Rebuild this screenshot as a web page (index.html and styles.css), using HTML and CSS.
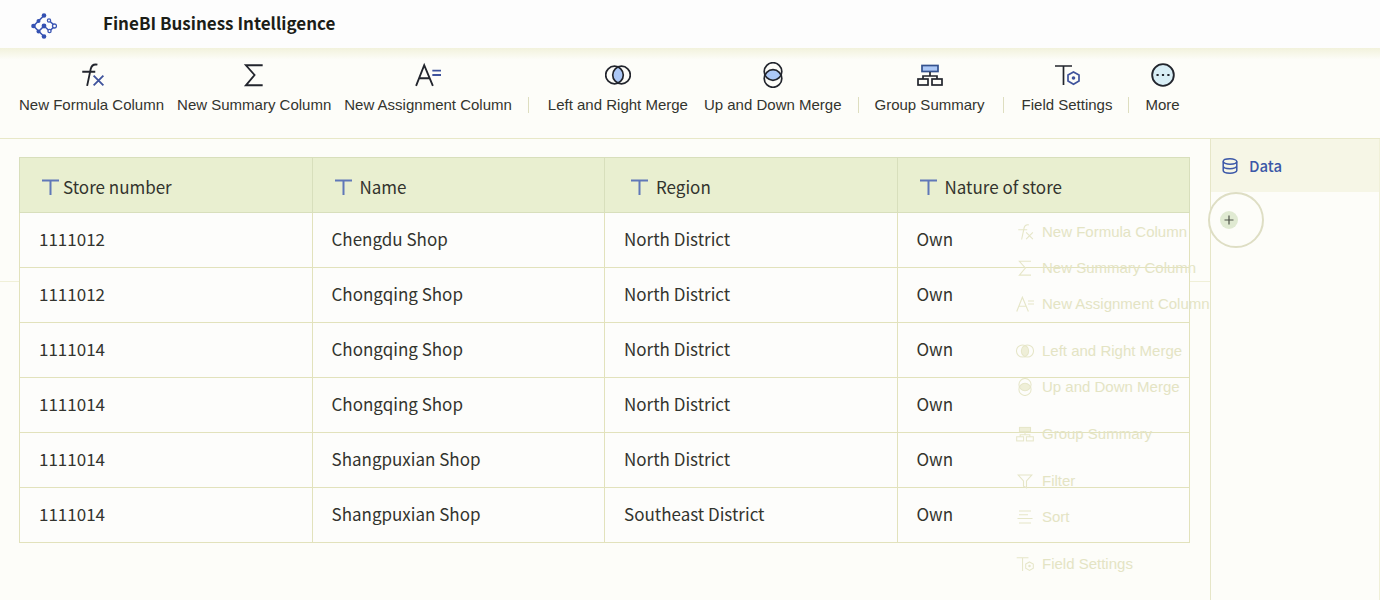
FILE: index.html
```html
<!DOCTYPE html>
<html lang="en">
<head>
<meta charset="utf-8">
<title>FineBI Business Intelligence</title>
<link rel="stylesheet" href="styles.css">
</head>
<body>
<svg class="defs" aria-hidden="true">
  <symbol id="i-formula" viewBox="0 0 24 24"><path d="M17 2.500c-4-.8-5.500.8-6.200 4L7.500 22M3 9h12" /><path class="accent" d="M13.500 12.500l9 9M22.500 12.500l-9 9"/></symbol>
  <symbol id="i-sum" viewBox="0 0 24 24"><path d="M20 3H4.500l8 9-8 9.500H20"/></symbol>
  <symbol id="i-assign" viewBox="0 0 24 24"><path d="M1 22L8.500 3l8 19M4 15h10"/><path class="accent" d="M16 8h8M16 12h8"/></symbol>
  <symbol id="i-lr" viewBox="0 0 26 24"><path class="tint" d="M13 4a9 9 0 0 1 0 16a9 9 0 0 1 0-16z"/><circle cx="9.500" cy="12" r="8.800"/><circle cx="16.500" cy="12" r="8.800"/></symbol>
  <symbol id="i-ud" viewBox="0 0 24 26"><path class="tint" d="M4 13a9 9 0 0 1 16 0a9 9 0 0 1-16 0z"/><circle cx="12" cy="9.500" r="8.800"/><circle cx="12" cy="16.500" r="8.800"/></symbol>
  <symbol id="i-group" viewBox="0 0 26 24"><rect class="tint" x="5" y="2.500" width="16" height="6"/><path d="M13 9v4M6 16v-3h14v3"/><rect x="1" y="16" width="10" height="6"/><rect x="15" y="16" width="10" height="6"/></symbol>
  <symbol id="i-field" viewBox="0 0 26 24"><path d="M1 3h17M9.500 3v19"/><path class="accent" d="M19.500 9l5.500 3v6l-5.500 3.200L14 18v-6z"/><circle class="dot" cx="19.500" cy="15" r="1.800"/></symbol>
  <symbol id="i-more" viewBox="0 0 24 24"><circle class="pale" cx="12" cy="12" r="10"/><path class="dots" d="M6 12h2M11 12h2M16 12h2"/></symbol>
  <symbol id="i-filter" viewBox="0 0 24 24"><path d="M3 4h18l-7 8v9l-4-2v-7z"/></symbol>
  <symbol id="i-sort" viewBox="0 0 24 24"><path d="M4 4h16M4 9h12M2 14h20M4 20h16"/></symbol>
  <symbol id="i-text" viewBox="0 0 17 16"><path d="M0 1.500h17M8.500 1v15"/></symbol>
</svg>

<header class="topbar">
  <svg class="logo" viewBox="0 0 26 26" aria-hidden="true">
    <path d="M13 2.500L2.500 13 13 23.500M7.500 18.500L13 13l5.500 5 5.500-5-6-5.500"/>
    <g class="solid"><circle cx="13" cy="2.500" r="2.300"/><circle cx="7.500" cy="8" r="2"/><circle cx="2.500" cy="13" r="2.300"/><circle cx="7.500" cy="18.500" r="2"/><circle cx="13" cy="23.500" r="2.300"/><circle cx="13" cy="13" r="2.400"/></g>
    <g class="hollow"><circle cx="18" cy="7.500" r="1.600"/><circle cx="23.500" cy="13" r="2"/><circle cx="18.500" cy="18" r="1.600"/></g>
  </svg>
  <h1 class="title">FineBI Business Intelligence</h1>
</header>

<nav class="toolbar" aria-label="Tools">
  <button class="tool"><svg class="icon"><use href="#i-formula"/></svg>New Formula Column</button>
  <button class="tool"><svg class="icon"><use href="#i-sum"/></svg>New Summary Column</button>
  <button class="tool"><svg class="icon"><use href="#i-assign"/></svg>New Assignment Column</button>
  <span class="sep"></span>
  <button class="tool tool-wide"><svg class="icon"><use href="#i-lr"/></svg>Left and Right Merge</button>
  <button class="tool"><svg class="icon"><use href="#i-ud"/></svg>Up and Down Merge</button>
  <span class="sep"></span>
  <button class="tool"><svg class="icon"><use href="#i-group"/></svg>Group Summary</button>
  <span class="sep sep-wide"></span>
  <button class="tool"><svg class="icon"><use href="#i-field"/></svg>Field Settings</button>
  <span class="sep"></span>
  <button class="tool"><svg class="icon"><use href="#i-more"/></svg>More</button>
</nav>

<div class="workspace">
  <main class="sheet">
    <table class="grid">
      <thead>
        <tr>
          <th><span class="head head-tight"><svg class="type"><use href="#i-text"/></svg>Store number</span></th>
          <th><span class="head"><svg class="type"><use href="#i-text"/></svg>Name</span></th>
          <th><span class="head head-inset"><svg class="type"><use href="#i-text"/></svg>Region</span></th>
          <th><span class="head"><svg class="type"><use href="#i-text"/></svg>Nature of store</span></th>
        </tr>
      </thead>
      <tbody>
        <tr><td>1111012</td><td>Chengdu Shop</td><td>North District</td><td>Own</td></tr>
        <tr><td>1111012</td><td>Chongqing Shop</td><td>North District</td><td>Own</td></tr>
        <tr><td>1111014</td><td>Chongqing Shop</td><td>North District</td><td>Own</td></tr>
        <tr><td>1111014</td><td>Chongqing Shop</td><td>North District</td><td>Own</td></tr>
        <tr><td>1111014</td><td>Shangpuxian Shop</td><td>North District</td><td>Own</td></tr>
        <tr><td>1111014</td><td>Shangpuxian Shop</td><td>Southeast District</td><td>Own</td></tr>
      </tbody>
    </table>
    <div class="menu">
      <button class="entry"><svg class="mini"><use href="#i-formula"/></svg>New Formula Column</button>
      <button class="entry"><svg class="mini"><use href="#i-sum"/></svg>New Summary Column</button>
      <button class="entry"><svg class="mini"><use href="#i-assign"/></svg>New Assignment Column</button>
      <button class="entry entry-first"><svg class="mini"><use href="#i-lr"/></svg>Left and Right Merge</button>
      <button class="entry"><svg class="mini"><use href="#i-ud"/></svg>Up and Down Merge</button>
      <button class="entry entry-first"><svg class="mini"><use href="#i-group"/></svg>Group Summary</button>
      <button class="entry entry-first"><svg class="mini"><use href="#i-filter"/></svg>Filter</button>
      <button class="entry"><svg class="mini"><use href="#i-sort"/></svg>Sort</button>
      <button class="entry entry-first"><svg class="mini"><use href="#i-field"/></svg>Field Settings</button>
    </div>
  </main>
  <aside class="panel">
    <h2 class="panel-head">
      <svg class="data" viewBox="0 0 16 16" aria-hidden="true"><ellipse cx="8" cy="3.500" rx="6.800" ry="2.700"/><path d="M1.200 3.500v9c0 1.500 3 2.700 6.800 2.700s6.800-1.200 6.800-2.700v-9M1.200 8c0 1.500 3 2.700 6.800 2.700s6.800-1.200 6.800-2.700"/></svg>
      Data
    </h2>
    <button class="add" aria-label="Add step"><svg class="plus" viewBox="0 0 18 18"><circle cx="9" cy="9" r="9"/><path d="M4.500 9h9M9 4.500v9"/></svg></button>
  </aside>
</div>
</body>
</html>
```
FILE: styles.css
```css
* { box-sizing: border-box; }

body {
  --ink: #22252d;
  --accent: #3f539c;
  --tint: #acc8f6;
  --tint-line: #34528e;
  margin: 0;
  min-height: 100vh;
  display: flex;
  flex-direction: column;
  background: #fdfdf9;
  color: #33342e;
  font-family: "Noto Sans CJK SC", "Noto Sans", sans-serif;
}

button {
  margin: 0;
  padding: 0;
  border: 0;
  background: none;
  color: inherit;
  font: inherit;
}

.defs { position: absolute; width: 0; height: 0; }

.topbar {
  display: flex;
  align-items: center;
  gap: 46px;
  height: 48px;
  padding-left: 31px;
  background: #fdfdfd;
}

.logo { width: 26px; height: 26px; margin-top: 3px; fill: none; stroke: #3c57b4; stroke-width: 1.6; }
.logo .solid { fill: #3451b2; stroke: none; }
.logo .hollow { fill: #fcfcfe; stroke-width: 1.3; }

.title { margin: 0 0 2px; font-size: 17px; font-weight: 700; line-height: 24px; color: #1c1e18; }

.toolbar {
  display: flex;
  align-items: flex-start;
  gap: 13px;
  height: 91px;
  padding: 13px 19px 0;
  border-bottom: 1px solid #e8e8c8;
  background: linear-gradient(#f2f2dc, #fdfdf9 12px);
}

.tool {
  display: flex;
  flex-direction: column;
  align-items: center;
  gap: 6px;
  font: 15px/20px "Liberation Sans", Arial, sans-serif;
  white-space: nowrap;
}
.tool-wide { padding: 0 3px; }

.icon { width: 28px; height: 28px; padding: 1px; fill: none; stroke: var(--ink); stroke-width: 1.7; }
.accent { stroke: var(--accent); }
.tint { fill: var(--tint); stroke: none; }
rect.tint { stroke: var(--tint-line); }
.pale { fill: #d8eef6; }
.dot { fill: var(--accent); stroke: none; }
.dots { stroke-width: 2; }

.sep { width: 1px; height: 16px; margin: 36px 3px 0; background: #dedec0; }
.sep-wide { margin-left: 5px; margin-right: 5px; }

.workspace { flex: 1; display: flex; }

.sheet { position: relative; flex: 1; padding: 18px 20px 0 19px; }
.sheet::before {
  content: "";
  position: absolute;
  top: 142px;
  left: 0;
  right: 0;
  height: 1px;
  background: #f0f0d8;
}

.grid {
  position: relative;
  width: 100%;
  table-layout: fixed;
  border-collapse: collapse;
  font-size: 17px;
  line-height: 26px;
}
.grid th, .grid td { height: 55px; border: 1px solid #e2e2bc; text-align: left; font-weight: 400; }
.grid td { padding: 0 0 2px 19px; background: #fdfdfb; }
.grid th { padding: 4px 0 0 22px; background: #e9efd0; border-color: #d8dfbc; }

.head { display: flex; align-items: center; gap: 8px; }
.head-tight { gap: 4px; }
.head-inset { padding-left: 4px; }
.type { width: 17px; height: 16px; fill: none; stroke: #6078b8; stroke-width: 2; }

.menu {
  --ink: #e6e6c8;
  --accent: #e6e6c8;
  --tint: #efefd8;
  --tint-line: #e6e6c8;
  position: absolute;
  top: 75px;
  right: 0;
  width: 194px;
  color: #e4e4c4;
}
.entry {
  display: flex;
  align-items: center;
  gap: 8px;
  height: 36px;
  font: 15px/20px "Liberation Sans", Arial, sans-serif;
  white-space: nowrap;
}
.entry-first { margin-top: 11px; }
.mini { flex: none; width: 18px; height: 18px; fill: none; stroke: var(--ink); stroke-width: 1.5; }

.panel { width: 170px; border-left: 1px solid #e6e6c8; border-right: 1px solid #f0f0d8; }

.panel-head {
  display: flex;
  align-items: center;
  gap: 11px;
  height: 53px;
  margin: 0;
  padding-left: 11px;
  background: #f6f6e6;
  color: #3c58a8;
  font-size: 15px;
  font-weight: 500;
}
.data { width: 16px; height: 16px; fill: none; stroke: #3c58a8; stroke-width: 1.5; }

.add {
  position: relative;
  display: flex;
  align-items: center;
  width: 56px;
  height: 56px;
  margin-left: -3px;
  padding-left: 10px;
  border: 2px solid #dedec4;
  border-radius: 50%;
  background: #fdfdf9;
}
.plus { width: 18px; height: 18px; fill: #e0ead2; stroke: none; }
.plus path { stroke: #4c5248; stroke-width: 1.2; }
```
